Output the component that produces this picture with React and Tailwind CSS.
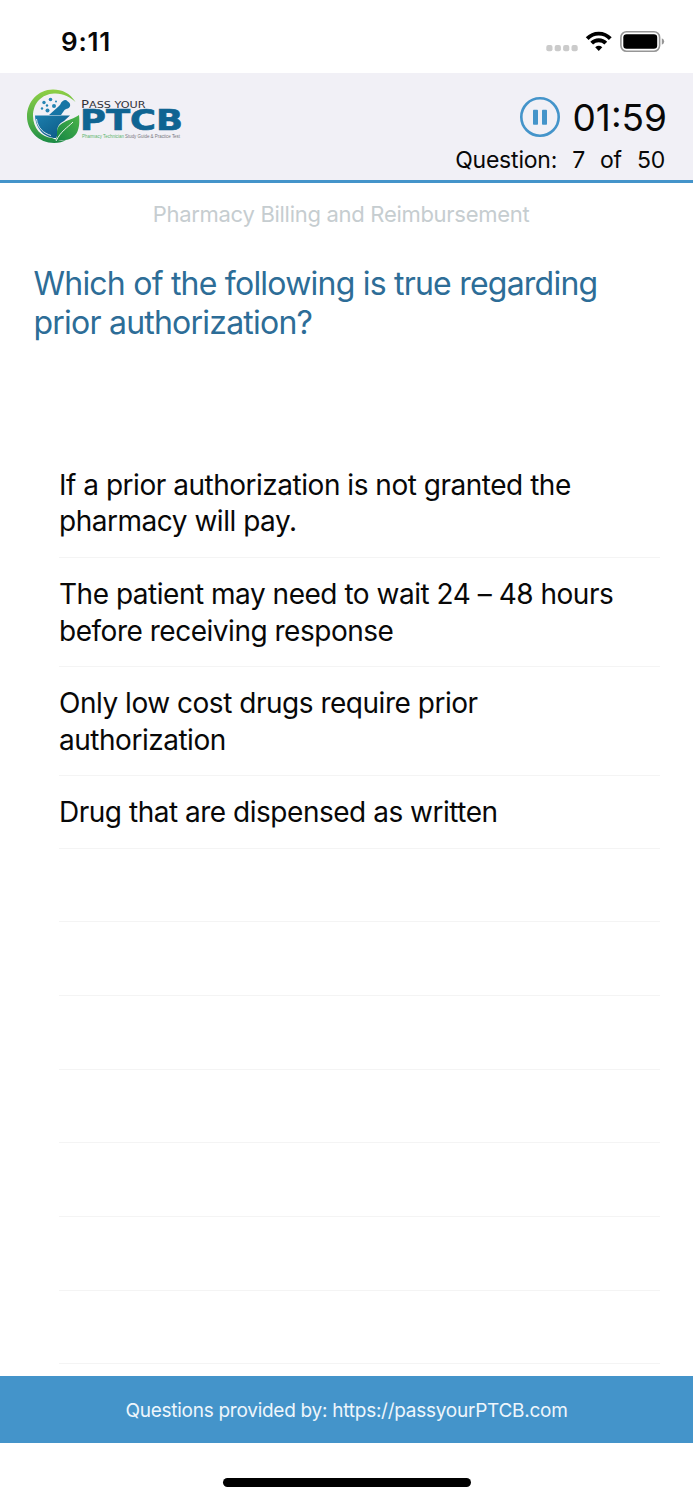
const answers = [
  ['If a prior authorization is not granted the', 'pharmacy will pay.'],
  ['The patient may need to wait 24 – 48 hours', 'before receiving response'],
  ['Only low cost drugs require prior', 'authorization'],
  ['Drug that are dispensed as written'],
]

const emptyRows = [1, 2, 3, 4, 5, 6, 7]

const Logo = () => (
  <svg width="160" height="58" viewBox="25 87 160 58" className="overflow-visible" role="img" aria-label="Pass Your PTCB">
    <defs>
      <linearGradient id="ring" x1="0" y1="0" x2="0" y2="1">
        <stop offset="0" stopColor="#8fcf45" />
        <stop offset="0.6" stopColor="#4fae48" />
        <stop offset="1" stopColor="#1b8a45" />
      </linearGradient>
      <linearGradient id="leaf" x1="1" y1="0" x2="0" y2="1">
        <stop offset="0" stopColor="#4db548" />
        <stop offset="1" stopColor="#128345" />
      </linearGradient>
      <linearGradient id="bowl" x1="0" y1="0" x2="1" y2="1">
        <stop offset="0" stopColor="#1c7fae" />
        <stop offset="1" stopColor="#0b5580" />
      </linearGradient>
    </defs>
    <path
      d="M75.500 102C70 93 62 89.500 53 89.500C38 89.500 27 102 27 116.500C27 131 39 143 54 143C59 143 63 142 66 140C60 141 56 140 52 138C41 137 33 128 33 116C33 103 42 94 54 93.500C63 93 70 97 75.500 102Z"
      fill="url(#ring)"
    />
    <path d="M35 115.500H70L64 121C58 124 56 129 58 134L56 138C44 138 35.500 128 35 115.500Z" fill="url(#bowl)" />
    <path d="M36.500 119C37.500 128 44 133.500 51 135.500" fill="none" stroke="#f2f1f7" strokeWidth="0.900" />
    <path d="M49 115L59 106C61 104 60.500 102.500 62.500 101.200C64.500 100 66 99.500 67.500 101.300C70.500 103 71 106 69 107.800C67.500 109 66 108.500 64.500 110L61 115Z" fill="#1675a5" />
    <g fill="#2584b3">
      <circle cx="50.500" cy="99.500" r="1.800" />
      <circle cx="44" cy="102.500" r="1.700" />
      <circle cx="54" cy="106" r="2" />
      <circle cx="47" cy="105.500" r="1.200" />
      <circle cx="42" cy="108.500" r="1.200" />
      <circle cx="47.500" cy="110.500" r="2" />
      <circle cx="56" cy="101.500" r="1" />
    </g>
    <path
      d="M79 115C80.500 129 77 139 65 140C61 140.500 59 139 57 142L55 141C57 138 57 136 57 133C57 121 69 122 79 115Z"
      fill="url(#leaf)"
    />
    <path d="M56 141C61 131 67 128 73 122" fill="none" stroke="#eef6ee" strokeWidth="1" />
    <text x="81" y="107.500" fontFamily="'DejaVu Sans', sans-serif" fontSize="9.800" textLength="8" lengthAdjust="spacingAndGlyphs" fill="#303038">P</text>
    <text x="89" y="107.500" fontFamily="'DejaVu Sans', sans-serif" fontSize="8.700" textLength="56.500" lengthAdjust="spacingAndGlyphs" fill="#303038">ASS YOUR</text>
    <text x="80" y="130.400" fontFamily="'DejaVu Sans', sans-serif" fontWeight="700" fontSize="27.500" textLength="103" lengthAdjust="spacingAndGlyphs" fill="#0f6492" stroke="#0f6492" strokeWidth="0.600">PTCB</text>
    <text x="82" y="137.500" fontFamily="'Liberation Sans', sans-serif" fontSize="5.500" textLength="42" lengthAdjust="spacingAndGlyphs" fill="#5ab56a">Pharmacy Technician</text>
    <text x="125" y="137.500" fontFamily="'Liberation Sans', sans-serif" fontSize="5.500" textLength="55" lengthAdjust="spacingAndGlyphs" fill="#77777d">Study Guide &amp; Practice Test</text>
  </svg>
)

const StatusIcons = () => (
  <svg width="120" height="24" viewBox="545 30 120 24" aria-hidden="true">
    <g fill="#cbcbcb">
      <rect x="546.300" y="45" width="6.200" height="6.200" rx="2" />
      <rect x="554.700" y="45" width="6.200" height="6.200" rx="2" />
      <rect x="563.100" y="45" width="6.200" height="6.200" rx="2" />
      <rect x="571.500" y="45" width="6.200" height="6.200" rx="2" />
    </g>
    <g fill="none" stroke="#000" strokeWidth="3.900">
      <path d="M587.200 38.600C593.500 31.900 604 31.900 610.300 38.600" />
      <path d="M591.700 43.100C595.500 39.200 602 39.200 605.800 43.100" />
    </g>
    <path d="M595.200 47.200Q598.750 44.300 602.300 47.200L598.750 51Z" fill="#000" />
    <rect x="620.900" y="31.800" width="38.700" height="19.400" rx="5.600" fill="none" stroke="#969696" strokeWidth="1.600" />
    <rect x="623.300" y="34.300" width="33.900" height="14.400" rx="3.300" fill="#000" />
    <path d="M661.800 38.300Q664.200 39.200 664.200 41.500Q664.200 43.800 661.800 44.700Z" fill="#969696" />
  </svg>
)

const StatusBar = () => (
  <div className="flex h-[73px] shrink-0 items-start justify-between pl-[61px] pr-[28px]">
    <span className="mt-[26px] text-[26px] leading-[32px] font-semibold tracking-[0.8px]">9:11</span>
    <div className="mt-[30px]">
      <StatusIcons />
    </div>
  </div>
)

const Header = () => (
  <header className="flex h-[109.500px] shrink-0 justify-between border-b-3 border-[#4494ca] bg-[#f1f0f6] pl-[25px] pr-[26px]">
    <div className="pt-[14px]">
      <Logo />
    </div>
    <div className="flex flex-col items-end pt-[23px]">
      <div className="flex items-start gap-[12px]">
        <svg width="42" height="42" viewBox="0 0 42 42" role="img" aria-label="Pause">
          <circle cx="21" cy="21" r="18.700" fill="none" stroke="#4494ca" strokeWidth="2.600" />
          <rect x="14" y="13.800" width="5" height="15" rx="0.800" fill="#4494ca" />
          <rect x="23" y="13.800" width="5" height="15" rx="0.800" fill="#4494ca" />
        </svg>
        <span className="pt-px text-[37px] leading-[42px]">01:59</span>
      </div>
      <div className="mr-[2px] flex text-[23px] leading-[42px] tracking-[-0.2px]">
        <span className="mr-[15px]">Question:</span>
        <span className="mr-[15px]">7</span>
        <span className="mr-[15px]">of</span>
        <span>50</span>
      </div>
    </div>
  </header>
)

const AnswerRow = ({ lines }) => (
  <li className="border-b border-[#f4f4f4] pt-[18px] pb-[16.700px] text-[28px] leading-[36.800px] tracking-[-0.48px]">
    {lines.map((line) => (
      <span key={line} className="block whitespace-nowrap">{line}</span>
    ))}
  </li>
)

const App = () => {
  return (
    <div className="flex h-[1500px] w-[693px] flex-col overflow-hidden bg-white font-['Inter',sans-serif] text-[#080808]">
      <StatusBar />
      <Header />
      <main className="flex flex-1 flex-col">
        <p className="mt-[15px] pr-[11px] text-center text-[22px] leading-[32px] tracking-[-0.29px] text-[#c6cdd0]">
          Pharmacy Billing and Reimbursement
        </p>
        <h1 className="mt-[34px] h-[185px] pl-[33.500px] text-[32px] leading-[39.500px] tracking-[-0.78px] text-[#2d6d97]">
          Which of the following is true regarding
          <br />
          prior authorization?
        </h1>
        <ul className="mr-[33px] ml-[59px]">
          {answers.map((lines) => (
            <AnswerRow key={lines[0]} lines={lines} />
          ))}
          {emptyRows.map((row) => (
            <li key={row} className="h-[73.650px] border-b border-[#f4f4f4]" />
          ))}
        </ul>
      </main>
      <footer className="flex h-[66.500px] shrink-0 items-center justify-center bg-[#4494ca] text-[19px] tracking-[-0.26px] text-[#eef6fc]">
        <span className="pt-[4px]">Questions provided by: https://passyourPTCB.com</span>
      </footer>
      <div className="flex h-[57.500px] shrink-0 items-start justify-center pt-[35.500px]">
        <div className="h-[8.500px] w-[248px] rounded-full bg-black" />
      </div>
    </div>
  )
}

export default App
